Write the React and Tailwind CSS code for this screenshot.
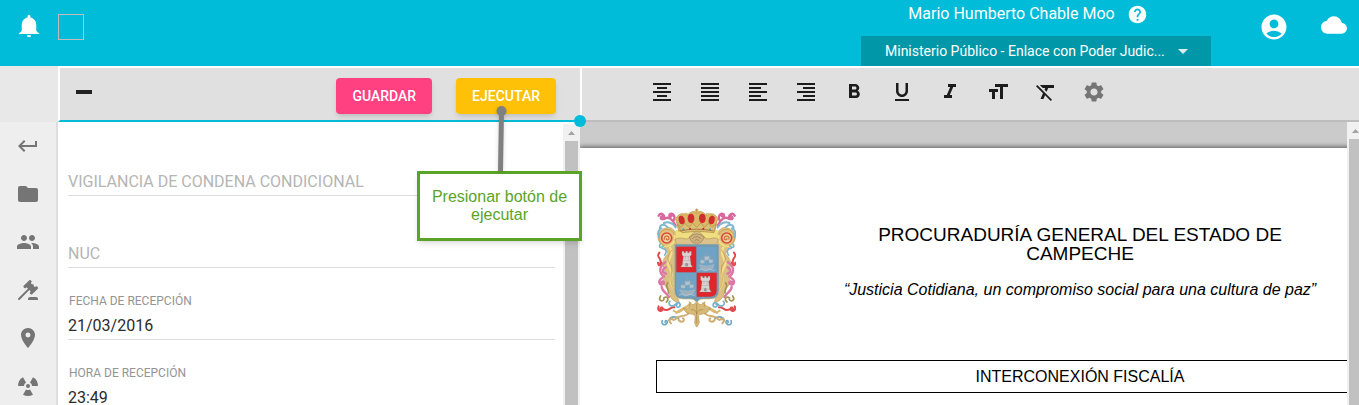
import React from "react";
import {
  MdAccountCircle,
  MdArrowDropDown,
  MdCloud,
  MdFolder,
  MdFormatAlignCenter,
  MdFormatAlignJustify,
  MdFormatAlignLeft,
  MdFormatAlignRight,
  MdFormatBold,
  MdFormatClear,
  MdFormatItalic,
  MdFormatSize,
  MdFormatUnderlined,
  MdHelp,
  MdKeyboardReturn,
  MdPeople,
  MdPlace,
  MdSettings,
} from "react-icons/md";

function BellIcon() {
  return (
    <svg viewBox="0 0 24 24" fill="currentColor" className="size-[26px]" aria-hidden="true">
      <path d="M14,19.5A2,2 0 0,1 12,21.500A2,2 0 0,1 10,19.5H14M12,1A1.300,1.300 0 0,1 13.300,2.300V3.300C16.500,4 18.700,6.500 18.700,10V15.500L21.700,18.500H2.300L5.300,15.500V10C5.300,6.500 7.500,4 10.700,3.300V2.300A1.300,1.300 0 0,1 12,1Z" />
    </svg>
  );
}

function GavelIcon() {
  return (
    <svg viewBox="0 0 24 24" fill="currentColor" className="size-6" aria-hidden="true">
      <path d="M2.3,20.28L11.9,10.68L10.5,9.26L9.78,9.97C9.39,10.36 8.76,10.36 8.37,9.97L7.66,9.26C7.27,8.87 7.27,8.24 7.66,7.85L13.32,2.19C13.71,1.8 14.34,1.8 14.73,2.19L15.44,2.9C15.83,3.29 15.83,3.92 15.44,4.31L14.73,5L16.15,6.43C16.54,6.04 17.17,6.04 17.56,6.43C17.95,6.82 17.95,7.46 17.56,7.85L18.97,9.26L19.68,8.55C20.07,8.16 20.71,8.16 21.1,8.55L21.8,9.26C22.19,9.65 22.19,10.29 21.8,10.68L16.15,16.33C15.76,16.72 15.12,16.72 14.73,16.33L14.03,15.63C13.63,15.24 13.63,14.6 14.03,14.21L14.73,13.5L13.32,12.09L3.71,21.7C3.32,22.09 2.69,22.09 2.3,21.7C1.91,21.31 1.91,20.67 2.3,20.28M20,19A2,2 0 0,1 22,21V22H12V21A2,2 0 0,1 14,19H20Z" />
    </svg>
  );
}

function RadioactiveIcon() {
  return (
    <svg viewBox="0 0 24 24" fill="currentColor" className="size-6" aria-hidden="true">
      <circle cx="12" cy="12" r="2" />
      <path d="M10,15.46 A4,4 0 0 0 14,15.46 L17,20.66 A10,10 0 0 1 7,20.66Z" />
      <path d="M10,15.46 A4,4 0 0 0 14,15.46 L17,20.66 A10,10 0 0 1 7,20.66Z" transform="rotate(120 12 12)" />
      <path d="M10,15.46 A4,4 0 0 0 14,15.46 L17,20.66 A10,10 0 0 1 7,20.66Z" transform="rotate(240 12 12)" />
    </svg>
  );
}

function Tower({ x, y }) {
  return (
    <g transform={`translate(${x} ${y})`} stroke="#8b8787" strokeWidth="1">
      <path d="M-14,-24 h6 v4 h5 v-4 h6 v4 h5 v-4 h6 v11 l-4,4 l3,25 l5,7 h-36 l5,-7 l3,-25 l-4,-4Z" fill="#d9d5d3" />
      <path d="M-9,-9 h18 M-10,4 h20 M-11,14 h22 M-4,-9 v8 M5,-8 v10" fill="none" />
      <path d="M-4,21 v-8 q4,-6 8,0 v8Z" fill="#9a9696" stroke="none" />
    </g>
  );
}

function Ship({ x, y }) {
  return (
    <g transform={`translate(${x} ${y})`} fill="none" stroke="#a9bcc8" strokeWidth="2" strokeLinecap="round">
      <path d="M-22,10 q22,8 44,-1 l-5,13 q-16,7 -32,0Z" fill="#9db0bc" />
      <path d="M0,10 V-28 M-12,9 V-14 M12,8 V-16 M-22,6 L-12,-13 L0,-27 L22,8" stroke="#8aa4b3" strokeWidth="1.600" />
      <path d="M-6,-17 q8,4 13,-1 l2,11 q-8,5 -16,1Z M-18,-6 q6,3 11,0 l1,9 q-7,4 -13,0Z M7,-7 q6,3 11,0 l1,9 q-7,4 -12,1Z" fill="#b4c3cb" stroke="#91a8b5" strokeWidth="1" />
      <path d="M-24,25 q7,-5 13,0 t13,0 t13,0 t9,-1" stroke="#c2ced4" strokeWidth="2" />
    </g>
  );
}

function CrestSide() {
  return (
    <g fill="none" strokeLinecap="round" strokeLinejoin="round">
      <path d="M118,324 C82,314 93,292 77,275 C60,254 80,243 74,224 C60,206 72,187 84,176 L70,154 C46,137 48,103 82,98 C98,95 100,108 112,114 V305Z" fill="#dcc083" stroke="#c2a360" strokeWidth="2" />
      <path d="M90,158 C101,174 88,188 84,204 C82,216 98,224 94,244 C88,263 98,284 118,297" stroke="#f3e08c" strokeWidth="6" />
      <path d="M96,165 C80,184 80,198 94,210 C100,234 86,250 98,275 C104,290 115,297 130,304" stroke="#b8924f" strokeWidth="2" />
      <circle cx="81" cy="128" r="25" fill="#e3c07c" stroke="#c0954a" strokeWidth="2" />
      <circle cx="80" cy="129" r="15" fill="#edd59a" stroke="#d8493c" strokeWidth="5" />
      <path d="M73,132 C71,121 87,120 87,130 C86,136 79,136 79,131" stroke="#c9733a" strokeWidth="4" />
      <path d="M104,122 C109,152 78,160 60,148" stroke="#f3e27e" strokeWidth="5" />
      <path d="M56,62 C62,51 77,59 71,70 C65,77 58,68 66,64 M72,72 C88,62 98,74 107,92 M100,78 C109,64 98,52 89,58 C86,63 91,67 95,63" stroke="#d9679b" strokeWidth="7" />
      <path d="M60,103 C56,86 75,87 82,96 M72,84 C83,78 99,84 107,97 M57,126 C50,113 57,103 64,100" stroke="#7fb6cc" strokeWidth="6" />
      <path d="M61,147 C54,157 64,162 71,151 M66,160 C80,160 81,172 74,180" stroke="#7fb6cc" strokeWidth="5" />
      <path d="M58,173 C46,189 67,187 61,205 M54,203 C55,217 68,209 63,201" stroke="#e0474a" strokeWidth="6" />
      <path d="M76,202 C55,216 58,236 72,244 M77,217 C66,222 66,234 78,236 M67,248 C52,257 57,274 70,267 C76,260 66,256 63,263 M65,276 C67,291 80,293 87,306" stroke="#dc76a5" strokeWidth="7" />
      <path d="M83,263 C73,276 89,282 85,294 M62,303 C53,315 66,323 72,313 M71,309 C83,301 88,314 79,321" stroke="#a39551" strokeWidth="5" />
      <path d="M56,334 C49,349 68,353 68,341 C67,333 58,340 62,344 M70,342 C86,353 88,335 103,337" stroke="#dc4a4c" strokeWidth="6" />
      <path d="M90,319 C80,329 97,339 107,327 C115,318 124,326 119,335 C112,340 104,331 112,327" stroke="#76b1cb" strokeWidth="5" />
      <path d="M67,377 C61,389 79,395 82,382 C82,372 73,378 76,383 M87,376 C91,363 107,363 116,372" stroke="#6fa7c2" strokeWidth="5" />
      <path d="M93,385 C83,376 92,367 101,375 M105,373 C119,357 133,369 145,356 M116,375 C126,387 137,375 129,370" stroke="#cfae70" strokeWidth="6" />
      <path d="M109,354 C125,337 139,343 151,325 M101,347 C111,356 125,351 131,340" stroke="#d8b873" strokeWidth="6" />
    </g>
  );
}

function Crest() {
  return (
    <svg viewBox="48 36 240 360" className="h-[120px] w-20" role="img" aria-label="Escudo de Campeche">
      <CrestSide />
      <g transform="translate(340 0) scale(-1 1)">
        <CrestSide />
      </g>
      <path d="M107,105 H233 V153 H107Z" fill="#efdf80" />
      <path d="M104,134 C126,119 139,144 152,123 C163,106 180,106 190,123 C203,144 218,119 236,134 L228,151 H112Z" fill="#dcc38d" stroke="#b3924f" strokeWidth="2" />
      <path d="M148,126 Q170,107 193,126 Q184,148 170,145 Q156,148 148,126Z M157,131 q13,-12 26,0 M163,137 q8,-7 15,0" fill="#cfb27a" stroke="#94795a" strokeWidth="2" />
      <path d="M116,108 L108,76 C107,58 130,50 142,61 C150,49 164,46 170,55 C176,46 191,49 198,61 C211,50 234,58 232,76 L224,108Z" fill="#d9b967" stroke="#b8944a" strokeWidth="2" />
      <g fill="#cf2f2c">
        <ellipse cx="125" cy="75" rx="9" ry="13" transform="rotate(-14 125 75)" />
        <ellipse cx="153" cy="70" rx="10" ry="14" />
        <ellipse cx="187" cy="70" rx="10" ry="14" />
        <ellipse cx="215" cy="75" rx="9" ry="13" transform="rotate(14 215 75)" />
      </g>
      <path d="M112,87 l12,10 l10,-12 l13,12 l10,-13 l13,13 l13,-13 l10,13 l13,-12 l10,12 l12,-10 l-6,26 q-48,-9 -96,0Z" fill="#dcc076" stroke="#ad8a45" strokeWidth="2" />
      <path d="M119,108 Q170,97 221,108" fill="none" stroke="#a97a3c" strokeWidth="3" />
      <g fill="#e6c665" stroke="#b28b41">
        <circle cx="170" cy="50" r="5" />
        <circle cx="139" cy="58" r="4" />
        <circle cx="202" cy="58" r="4" />
        <circle cx="111" cy="72" r="4" />
        <circle cx="229" cy="72" r="4" />
      </g>
      <path d="M170,40 v12 M165,44 h10" stroke="#a8863f" strokeWidth="2" />
      <g fill="#4f9bbb">
        <circle cx="130" cy="103" r="3" />
        <circle cx="210" cy="103" r="3" />
      </g>
      <g fill="#b82e32">
        <circle cx="150" cy="101" r="3" />
        <circle cx="190" cy="101" r="3" />
      </g>
      <path d="M103,147 H237 V286 Q237,312 210,312 H188 Q175,312 170,324 Q165,312 152,312 H130 Q103,312 103,286Z" fill="#7099b4" stroke="#d5bd78" strokeWidth="2" />
      <path d="M109,155 H169 V232 H109Z" fill="#df262d" />
      <path d="M170,155 H230 V232 H170Z" fill="#6fa3c6" />
      <path d="M109,233 H169 V305 H130 Q109,305 109,286Z" fill="#6fa3c6" />
      <path d="M170,233 H230 V286 Q230,305 210,305 H170Z" fill="#df262d" />
      <Tower x={140} y={193} />
      <Ship x={200} y={200} />
      <Ship x={142} y={275} />
      <Tower x={196} y={268} />
      <path d="M148,320 C157,333 164,330 170,319 C176,330 185,333 195,320 C188,342 203,346 211,337 C202,365 184,351 175,363 L178,383 L170,397 L164,383 L166,363 C156,351 139,365 129,337 C139,346 153,340 148,320Z" fill="#d8ba78" stroke="#b3924f" strokeWidth="2" />
      <path d="M170,326 V385 M153,344 Q167,342 170,357 Q174,342 190,344" fill="none" stroke="#a78547" strokeWidth="2" />
    </svg>
  );
}

const sideItems = [
  { label: "Regresar", icon: <MdKeyboardReturn className="size-6" /> },
  { label: "Carpeta", icon: <MdFolder className="size-6" /> },
  { label: "Personas", icon: <MdPeople className="size-6" /> },
  { label: "Audiencias", icon: <GavelIcon /> },
  { label: "Lugares", icon: <MdPlace className="size-6" /> },
  { label: "Delitos", icon: <RadioactiveIcon /> },
];

const formatItems = [
  { label: "Centrar", Icon: MdFormatAlignCenter },
  { label: "Justificar", Icon: MdFormatAlignJustify },
  { label: "Alinear a la izquierda", Icon: MdFormatAlignLeft },
  { label: "Alinear a la derecha", Icon: MdFormatAlignRight },
  { label: "Negrita", Icon: MdFormatBold },
  { label: "Subrayado", Icon: MdFormatUnderlined },
  { label: "Cursiva", Icon: MdFormatItalic },
  { label: "Tamaño", Icon: MdFormatSize },
  { label: "Quitar formato", Icon: MdFormatClear },
];

function Header() {
  return (
    <header className="flex h-[66px] shrink-0 bg-[#00bcd8] text-white">
      <div className="flex flex-1 items-start gap-4 pt-[14px] pl-4">
        <button type="button" aria-label="Notificaciones">
          <BellIcon />
        </button>
        <span className="size-[26px] border border-[#bdbdbd]" />
      </div>
      <div className="flex w-[350px] flex-col justify-between">
        <div className="flex h-7 items-center justify-center gap-3 pr-4">
          <span className="text-base">Mario Humberto Chable Moo</span>
          <button type="button" aria-label="Ayuda">
            <MdHelp className="size-[21px]" />
          </button>
        </div>
        <div className="relative">
          <select
            aria-label="Puesto"
            className="h-[30px] w-full appearance-none bg-[#0097a9] pr-8 pl-6 text-sm"
          >
            <option>Ministerio Público - Enlace con Poder Judic...</option>
          </select>
          <MdArrowDropDown className="pointer-events-none absolute top-[3px] right-4 size-6 text-[#d8eef1]" />
        </div>
      </div>
      <div className="flex items-start gap-8 pt-3 pr-3 pl-12">
        <button type="button" aria-label="Cuenta">
          <MdAccountCircle className="size-[30px]" />
        </button>
        <button type="button" aria-label="Nube">
          <MdCloud className="size-[26px]" />
        </button>
      </div>
    </header>
  );
}

function Sidebar() {
  return (
    <nav className="flex w-[58px] shrink-0 flex-col">
      <div className="h-14 shrink-0 bg-[#e8e8e8]" />
      <div className="flex flex-1 flex-col border-r-2 border-[#dedede] bg-[#eeeeee] text-[#757575]">
        {sideItems.map(({ label, icon }) => (
          <button key={label} type="button" aria-label={label} className="flex h-12 shrink-0 items-center justify-center">
            {icon}
          </button>
        ))}
      </div>
    </nav>
  );
}

function Field({ id, label, value }) {
  return (
    <div className="flex h-[72px] shrink-0 flex-col justify-end">
      {value && (
        <label htmlFor={id} className="pl-px text-xs leading-4 text-[#949494]">
          {label}
        </label>
      )}
      <input
        id={id}
        aria-label={value ? undefined : label}
        defaultValue={value}
        placeholder={value ? undefined : label}
        className="h-[31px] w-full border-b border-[#dcdcdc] pt-[3px] text-base text-[#2b2b2b] outline-none placeholder:text-[#b5b5b5]"
      />
    </div>
  );
}

function Scrollbar() {
  return (
    <div className="flex w-[17px] shrink-0 flex-col items-center bg-[#f1f1f1]" aria-hidden="true">
      <svg viewBox="0 0 17 17" className="h-[17px] w-[17px]">
        <path d="M5,11 L8.500,7 L12,11Z" fill="#a3a3a3" />
      </svg>
      <div className="w-[13px] flex-1 bg-[#c1c1c1]" />
    </div>
  );
}

function FormPane() {
  return (
    <section className="relative z-10 flex w-[522px] shrink-0 flex-col">
      <div className="flex h-14 shrink-0 items-center gap-6 border-t-2 border-b-2 border-l-2 border-t-white border-b-[#00bcd8] border-l-white bg-[#e0e0e0] pt-1 pr-6 pl-4">
        <button type="button" aria-label="Contraer" className="mr-auto mb-2 flex h-6 items-center">
          <span className="h-1 w-4 bg-[#222222]" />
        </button>
        <button type="button" className="h-9 rounded-sm bg-[#ff4081] px-4 text-sm font-medium text-white shadow-md">
          GUARDAR
        </button>
        <div className="relative">
          <button type="button" className="h-9 rounded-sm bg-[#ffc107] px-4 text-sm font-medium text-white shadow-md">
            EJECUTAR
          </button>
          <Callout />
        </div>
      </div>
      <span className="absolute top-[49px] -right-[6px] size-3 rounded-full bg-[#00bcd8]" />
      <div className="flex min-h-0 flex-1 bg-white pt-0.5">
        <form className="flex min-w-0 flex-1 flex-col overflow-hidden pr-2 pl-[10px]">
          <Field id="tipo" label="VIGILANCIA DE CONDENA CONDICIONAL" />
          <Field id="nuc" label="NUC" />
          <Field id="fecha" label="FECHA DE RECEPCIÓN" value="21/03/2016" />
          <Field id="hora" label="HORA DE RECEPCIÓN" value="23:49" />
        </form>
        <Scrollbar />
      </div>
    </section>
  );
}

function Callout() {
  return (
    <div className="absolute top-7 -right-[26px] w-[165px]">
      <svg viewBox="0 0 165 65" className="block w-full drop-shadow-sm" aria-hidden="true">
        <path d="M84.500,5 L83.500,65" stroke="#808080" strokeWidth="5" />
        <circle cx="84.500" cy="5" r="5" fill="#808080" />
      </svg>
      <p className="flex h-[70px] items-center justify-center border-3 border-[#5ba427] bg-white px-2 text-center font-['Liberation_Sans',sans-serif] text-base leading-[18px] text-[#5ba427] shadow-md">
        Presionar botón de ejecutar
      </p>
    </div>
  );
}

function DocumentPane() {
  return (
    <section className="flex min-w-0 flex-1 flex-col">
      <div className="flex h-14 shrink-0 items-center border-t-2 border-b-2 border-l-2 border-t-white border-b-[#bdbdbd] border-l-white bg-[#e0e0e0] pb-1 pl-14 text-[#1c1c1c]">
        {formatItems.map(({ label, Icon }) => (
          <button key={label} type="button" aria-label={label} className="flex size-12 items-center justify-center">
            <Icon className="size-6" />
          </button>
        ))}
        <button type="button" aria-label="Configuración" className="flex size-12 items-center justify-center text-[#757575]">
          <MdSettings className="size-6" />
        </button>
      </div>
      <div className="flex min-h-0 flex-1">
        <div className="min-w-0 flex-1 overflow-hidden bg-[#cbcbcb] pt-[26px]">
          <article className="min-h-full w-[1000px] bg-white px-[76px] pt-[59px] font-['Liberation_Sans',sans-serif] text-black shadow-[0_0_5px_1px_#555555]">
            <div className="grid grid-cols-[168px_1fr_168px]">
              <Crest />
              <div className="pt-[18px] text-center">
                <h1 className="text-[19px] leading-[19px]">PROCURADURÍA GENERAL DEL ESTADO DE CAMPECHE</h1>
                <p className="mt-[18px] text-base leading-[18px] italic">
                  “Justicia Cotidiana, un compromiso social para una cultura de paz”
                </p>
              </div>
            </div>
            <h2 className="mt-[33px] flex h-[33px] items-center justify-center border border-black text-base">
              INTERCONEXIÓN FISCALÍA
            </h2>
          </article>
        </div>
        <div className="flex w-3 shrink-0 overflow-hidden">
          <Scrollbar />
        </div>
      </div>
    </section>
  );
}

export default function App() {
  return (
    <div className="flex h-screen flex-col overflow-hidden bg-white font-[Roboto,sans-serif]">
      <Header />
      <main className="flex min-h-0 flex-1">
        <Sidebar />
        <FormPane />
        <DocumentPane />
      </main>
    </div>
  );
}
